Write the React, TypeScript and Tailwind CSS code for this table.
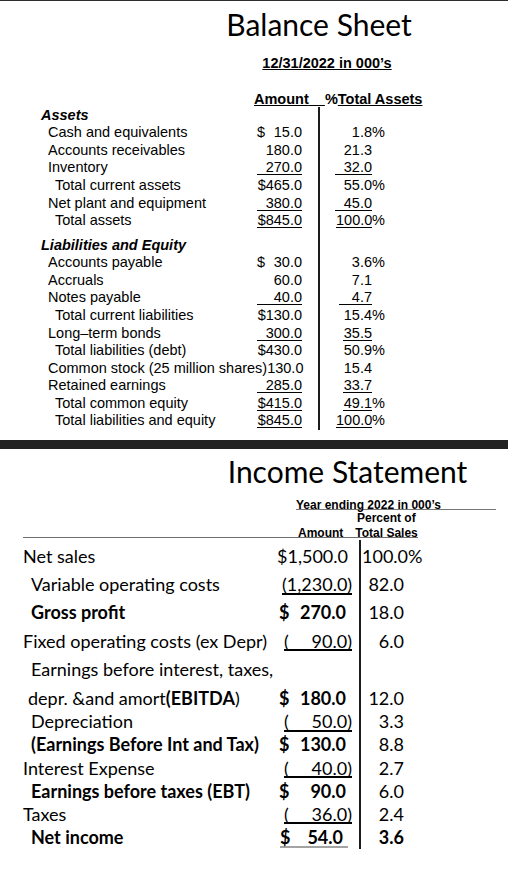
import React from "react";

const ARIAL = "font-['Liberation_Sans',Arial,sans-serif]";
const CAL = "font-['Lato','Open_Sans',sans-serif]";

type BR = {
  label: string;
  pad: string;
  head?: boolean;
  amt?: string;
  dollar?: boolean;
  amtU?: boolean;
  pct?: string;
  pctW?: string;
  sign?: boolean;
};

const assets: BR[] = [
  { label: "Assets", pad: "pl-[41px]", head: true },
  { label: "Cash and equivalents", pad: "pl-[48px]", amt: "15.0", dollar: true, pct: "1.8", sign: true },
  { label: "Accounts receivables", pad: "pl-[48px]", amt: "180.0", pct: "21.3" },
  { label: "Inventory", pad: "pl-[48px]", amt: "270.0", amtU: true, pct: "32.0", pctW: "w-[37px]" },
  { label: "Total current assets", pad: "pl-[55px]", amt: "$465.0", pct: "55.0", sign: true },
  { label: "Net plant and equipment", pad: "pl-[48px]", amt: "380.0", amtU: true, pct: "45.0", pctW: "w-[37px]" },
  { label: "Total assets", pad: "pl-[55px]", amt: "$845.0", amtU: true, pct: "100.0", pctW: "w-[36px]", sign: true },
];

const liabs: BR[] = [
  { label: "Liabilities and Equity", pad: "pl-[41px]", head: true },
  { label: "Accounts payable", pad: "pl-[48px]", amt: "30.0", dollar: true, pct: "3.6", sign: true },
  { label: "Accruals", pad: "pl-[48px]", amt: "60.0", pct: "7.1" },
  { label: "Notes payable", pad: "pl-[48px]", amt: "40.0", amtU: true, pct: "4.7", pctW: "w-[33px]" },
  { label: "Total current liabilities", pad: "pl-[55px]", amt: "$130.0", pct: "15.4", sign: true },
  { label: "Long\u2013term bonds", pad: "pl-[48px]", amt: "300.0", amtU: true, pct: "35.5", pctW: "w-[29px]" },
  { label: "Total liabilities (debt)", pad: "pl-[55px]", amt: "$430.0", pct: "50.9", sign: true },
  { label: "Common stock (25 million shares)130.0", pad: "pl-[48px]", pct: "15.4" },
  { label: "Retained earnings", pad: "pl-[48px]", amt: "285.0", amtU: true, pct: "33.7", pctW: "w-[29px]" },
  { label: "Total common equity", pad: "pl-[55px]", amt: "$415.0", amtU: true, pct: "49.1", pctW: "w-[29px]", sign: true },
  { label: "Total liabilities and equity", pad: "pl-[55px]", amt: "$845.0", amtU: true, pct: "100.0", pctW: "w-[36px]", sign: true },
];

function BalanceRow({ r }: { r: BR }) {
  let amount: React.ReactNode = null;
  if (r.amt) {
    if (r.dollar) {
      amount = (
        <div className="flex w-[45px] justify-between">
          <span>$</span>
          <span>{r.amt}</span>
        </div>
      );
    } else if (r.amtU) {
      amount = (
        <div className="w-[45px] text-right">
          <span className="inline-block w-[45px] border-b border-black text-right leading-[13px]">{r.amt}</span>
        </div>
      );
    } else {
      amount = <div className="w-[45px] text-right">{r.amt}</div>;
    }
  }
  let pct: React.ReactNode = null;
  if (r.pct) {
    pct = r.pctW ? (
      <span className={`inline-block ${r.pctW} border-b border-black text-right leading-[13px]`}>{r.pct}</span>
    ) : (
      r.pct
    );
  }
  return (
    <div className="flex h-[17.6px] leading-[17.6px]">
      <div className="flex w-[318px] shrink-0">
        <div
          className={`w-[257px] shrink-0 whitespace-nowrap ${r.pad} ${r.head ? "font-bold italic" : ""}`}
        >
          {r.label}
        </div>
        <div className="w-[45px] shrink-0">{amount}</div>
      </div>
      <div className="flex border-l-2 border-[#1c1c1c]">
        <div className="w-[52px] shrink-0 text-right">{pct}</div>
        <span>{r.sign ? "%" : ""}</span>
      </div>
    </div>
  );
}

type IR = {
  label: React.ReactNode;
  pad: string;
  bold?: boolean;
  amt?: React.ReactNode;
  pct?: string;
  pctBold?: boolean;
  sign?: boolean;
  size: string;
};

const plainAmt = (t: string) => <div className="w-[69px] text-right">{t}</div>;
const boldDollar = (t: string) => (
  <div className="ml-[2px] flex w-[67px] justify-between font-bold">
    <span>$</span>
    <span>{t}</span>
  </div>
);
const paren = (t: string) => (
  <span className="ml-[7px] inline-flex w-[68px] justify-between border-b-2 border-black leading-[16.5px]">
    <span>(</span>
    <span>{t})</span>
  </span>
);

const BIG = "h-[28.4px] leading-[28.4px]";
const BIG6 = "h-[26.6px] leading-[28.4px]";
const SM = "h-[23.2px] leading-[23.2px]";

const income: IR[] = [
  { label: "Net sales", pad: "pl-[23px]", amt: plainAmt("$1,500.0"), pct: "100.0", sign: true, size: BIG },
  {
    label: "Variable operating costs",
    pad: "pl-[31px]",
    amt: (
      <span className="ml-[5px] inline-block w-[70px] border-b-2 border-black text-right leading-[16.5px]">
        (1,230.0)
      </span>
    ),
    pct: "82.0",
    size: BIG,
  },
  { label: "Gross profit", pad: "pl-[31px]", bold: true, amt: boldDollar("270.0"), pct: "18.0", size: BIG },
  { label: "Fixed operating costs (ex Depr)", pad: "pl-[23px]", amt: paren("90.0"), pct: "6.0", size: BIG },
  { label: "Earnings before interest, taxes,", pad: "pl-[31px]", size: BIG },
  {
    label: (
      <>
        depr. &amp;and amort<span className="font-bold">(EBITDA</span>)
      </>
    ),
    pad: "pl-[28px]",
    amt: boldDollar("180.0"),
    pct: "12.0",
    size: BIG6,
  },
  { label: "Depreciation", pad: "pl-[31px]", amt: paren("50.0"), pct: "3.3", size: SM },
  { label: "(Earnings Before Int and Tax)", pad: "pl-[31px]", bold: true, amt: boldDollar("130.0"), pct: "8.8", size: SM },
  { label: "Interest Expense", pad: "pl-[23px]", amt: paren("40.0"), pct: "2.7", size: SM },
  { label: "Earnings before taxes (EBT)", pad: "pl-[31px]", bold: true, amt: boldDollar("90.0"), pct: "6.0", size: SM },
  { label: "Taxes", pad: "pl-[23px]", amt: paren("36.0"), pct: "2.4", size: SM },
  {
    label: "Net income",
    pad: "pl-[31px]",
    bold: true,
    amt: (
      <span className="ml-[3px] inline-flex w-[68px] justify-between border-b-2 border-[#a3a3a3] pr-[5px] font-bold leading-[16.5px]">
        <span>$</span>
        <span>54.0</span>
      </span>
    ),
    pct: "3.6",
    pctBold: true,
    size: SM,
  },
];

function IncomeRow({ r }: { r: IR }) {
  return (
    <div className={`flex ${r.size}`}>
      <div className={`w-[277px] shrink-0 whitespace-nowrap ${r.pad} ${r.bold ? "font-bold" : ""}`}>{r.label}</div>
      <div className="w-[82px] shrink-0">{r.amt}</div>
      <div className="flex border-l-2 border-[#1c1c1c]">
        {r.sign ? (
          <span className="whitespace-nowrap pl-[1px]">{r.pct}%</span>
        ) : (
          <div className={`w-[43px] shrink-0 text-right ${r.pctBold ? "font-bold" : ""}`}>{r.pct}</div>
        )}
      </div>
    </div>
  );
}

export default function App() {
  return (
    <div className="min-h-[880px] w-[508px] overflow-hidden bg-white text-black">
      <div className="h-px bg-[#2e2e2e]" />
      {/* Balance sheet */}
      <div className={`${CAL} mt-[9px] h-[29px] pl-[130px] text-center text-[30px] leading-[29px]`}>Balance Sheet</div>
      <div className={`${ARIAL} mt-[16px] h-[17px] pl-[146px] text-center text-[14.5px] font-bold leading-[17px]`}>
        <span className="underline">12/31/2022 in 000’s</span>
      </div>
      <div className={`${ARIAL} mt-[19px] h-[15.6px] whitespace-pre pl-[254px] text-[14.5px] font-bold leading-[17px]`}>
        <span className="underline">Amount{"\u00a0\u00a0\u00a0\u00a0"}</span>
        <span>%</span>
        <span className="underline">Total Assets</span>
      </div>
      <div className={`${ARIAL} text-[14.5px]`}>
        {assets.map((r, i) => (
          <BalanceRow key={"a" + i} r={r} />
        ))}
        <div className="flex h-[6.8px]">
          <div className="w-[318px] shrink-0" />
          <div className="border-l-2 border-[#1c1c1c]" />
        </div>
        {liabs.map((r, i) => (
          <BalanceRow key={"l" + i} r={r} />
        ))}
      </div>
      <div className="mt-[9.8px] h-[9px] bg-[#222222]" />
      {/* Income statement */}
      <div className={`${CAL} mt-[8.3px] h-[29px] pl-[187px] text-center text-[30px] leading-[29px]`}>
        Income Statement
      </div>
      <div
        className={`${ARIAL} ml-[296px] mt-[11.5px] h-[12.2px] w-[200px] border-b border-[#777777] text-[12px] font-bold leading-[14px]`}
      >
        Year ending 2022 in 000’s
      </div>
      <div className={`${ARIAL} mt-[1.5px] h-[14.3px] pl-[357px] text-[12px] font-bold leading-[14px]`}>Percent of</div>
      <div
        className={`${ARIAL} ml-[23px] flex h-[12.2px] w-[395px] border-b border-[#6e6e6e] pl-[275px] text-[12px] font-bold leading-[14px]`}
      >
        <span>Amount</span>
        <span className="ml-[12px]">Total Sales</span>
      </div>
      <div className={`${CAL} text-[18px]`}>
        <div className="mt-[2px] flex h-[1.8px]">
          <div className="w-[359px] shrink-0" />
          <div className="border-l-2 border-[#1c1c1c]" />
        </div>
        {income.map((r, i) => (
          <IncomeRow key={"i" + i} r={r} />
        ))}
      </div>
    </div>
  );
}
